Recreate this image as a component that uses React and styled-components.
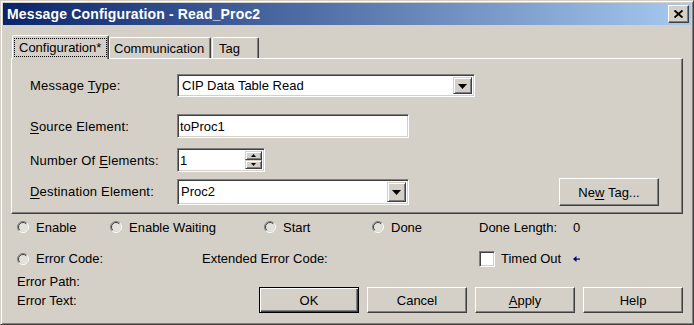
import React from "react";
import styled, { createGlobalStyle } from "styled-components";

const GlobalStyle = createGlobalStyle`
  html, body {
    margin: 0;
    padding: 0;
    background: #d4d0c8;
  }
  body {
    font-family: "Liberation Sans", Arial, sans-serif;
    font-size: 13px;
    color: #000;
  }
  * { box-sizing: border-box; }
`;

const Window = styled.div`
  width: 694px;
  height: 325px;
  background: #d4d0c8;
  border: 1px solid;
  border-color: #d4d0c8 #404040 #404040 #d4d0c8;
  box-shadow: inset 1px 1px #fff, inset -1px -1px #808080;
  padding: 2px;
  display: flex;
  flex-direction: column;
`;

const TitleBar = styled.div`
  height: 22px;
  display: flex;
  align-items: center;
  padding-left: 4px;
  background: linear-gradient(to right, #0a246a, #a6caf0);
`;

const Title = styled.span`
  color: #fff;
  font-weight: bold;
  font-size: 14px;
  letter-spacing: 0.15px;
`;

const raised = `
  background: #d4d0c8;
  border: 1px solid;
  border-color: #fff #404040 #404040 #fff;
  box-shadow: inset -1px -1px #808080;
`;

const sunken = `
  background: #fff;
  border: 1px solid;
  border-color: #808080 #fff #fff #808080;
  box-shadow: inset 1px 1px #404040, inset -1px -1px #d4d0c8;
`;

const CloseButton = styled.div`
  ${raised}
  width: 21px;
  height: 18px;
  margin-left: auto;
  margin-right: 2px;
  display: flex;
  align-items: center;
  justify-content: center;
`;

const Body = styled.div`
  padding: 10px 8px 0 8px;
  display: flex;
  flex-direction: column;
`;

const TabRow = styled.div`
  height: 23px;
  display: flex;
  align-items: flex-end;
  padding-left: 1px;
`;

const Tab = styled.div`
  position: relative;
  z-index: 1;
  width: ${(p) => p.$w}px;
  height: ${(p) => (p.$active ? 24 : 21)}px;
  margin-bottom: ${(p) => (p.$active ? -1 : 0)}px;
  margin-left: ${(p) => p.$ml || 0}px;
  padding-left: ${(p) => p.$pad}px;
  padding-bottom: ${(p) => (p.$active ? 2 : 0)}px;
  display: flex;
  align-items: center;
  background: #d4d0c8;
  border-top: 1px solid #fff;
  border-left: 1px solid #fff;
  border-right: 1px solid #404040;
  box-shadow: inset -1px 0 #808080;
  border-radius: 2px 2px 0 0;
  white-space: nowrap;
`;

const FocusLabel = styled.span`
  border: 1px dotted #000;
  height: 19px;
  padding: 0 5px 0 4px;
  display: flex;
  align-items: center;
  margin-top: 2px;
`;

const Panel = styled.div`
  height: 156px;
  width: 672px;
  border: 1px solid;
  border-color: #fff #404040 #404040 #fff;
  box-shadow: inset -1px -1px #808080;
  padding: 15px 0 0 18px;
  display: flex;
  flex-direction: column;
`;

const Field = styled.div`
  display: flex;
  align-items: center;
  margin-top: ${(p) => p.$mt || 0}px;
`;

const Label = styled.span`
  width: 147px;
  flex-shrink: 0;
  white-space: nowrap;
  letter-spacing: 0.2px;
`;

const U = styled.span`
  text-decoration: underline;
  text-underline-offset: 2px;
`;

const Combo = styled.div`
  ${sunken}
  width: ${(p) => p.$w}px;
  height: ${(p) => p.$h}px;
  padding: 2px;
  display: flex;
  align-items: stretch;
`;

const Value = styled.span`
  flex: 1;
  display: flex;
  align-items: center;
  padding-left: ${(p) => p.$pad || 0}px;
  white-space: nowrap;
`;

const DropButton = styled.div`
  ${raised}
  border-color: #d4d0c8 #404040 #404040 #d4d0c8;
  box-shadow: inset 1px 1px #fff, inset -1px -1px #808080;
  width: 19px;
  display: flex;
  align-items: center;
  justify-content: center;
  padding-top: 1px;
`;

const SpinColumn = styled.div`
  width: 17px;
  display: flex;
  flex-direction: column;
`;

const SpinButton = styled.div`
  ${raised}
  border-color: #d4d0c8 #404040 #404040 #d4d0c8;
  box-shadow: inset 1px 1px #fff, inset -1px -1px #808080;
  flex: 1;
  display: flex;
  align-items: center;
  justify-content: center;
`;

const PushButton = styled.div`
  ${raised}
  width: ${(p) => p.$w || 100}px;
  height: ${(p) => p.$h || 26}px;
  display: flex;
  align-items: center;
  justify-content: center;
  margin-left: ${(p) => (p.$auto ? "auto" : "0")};
  margin-right: ${(p) => p.$mr || 0}px;
  margin-top: ${(p) => p.$mt || 0}px;
  align-self: flex-start;
  ${(p) =>
    p.$default &&
    `
    border-color: #000;
    box-shadow: inset 1px 1px #fff, inset -1px -1px #404040, inset -2px -2px #808080;
  `}
`;

const StatusRow = styled.div`
  display: flex;
  align-items: center;
  height: ${(p) => p.$h}px;
  margin-top: ${(p) => p.$mt}px;
  padding-left: 6px;
`;

const Cell = styled.div`
  width: ${(p) => (p.$w ? `${p.$w}px` : "auto")};
  flex-shrink: 0;
  display: flex;
  align-items: center;
  gap: ${(p) => p.$gap || 0}px;
  white-space: nowrap;
`;

const CheckBox = styled.span`
  ${sunken}
  width: 16px;
  height: 16px;
  display: inline-block;
`;

const BottomArea = styled.div`
  display: flex;
  margin-top: 6px;
  padding-left: 6px;
`;

const ErrorColumn = styled.div`
  width: 242px;
  display: flex;
  flex-direction: column;
  gap: 3px;
`;

const Line = styled.span`
  height: 16px;
  display: flex;
  align-items: center;
`;

const ButtonBar = styled.div`
  display: flex;
  gap: 8px;
  margin-top: 14px;
`;

function Radio() {
  return (
    <svg width="12" height="12" viewBox="0 0 12 12">
      <circle cx="6" cy="6" r="4.6" fill="#e4e1db" />
      <path d="M2.1 9.9 A5.5 5.5 0 0 1 9.9 2.1" fill="none" stroke="#808080" />
      <path d="M9.9 2.1 A5.5 5.5 0 0 1 2.1 9.9" fill="none" stroke="#fff" />
      <path d="M2.8 9.2 A4.5 4.5 0 0 1 9.2 2.8" fill="none" stroke="#404040" />
    </svg>
  );
}

function DownArrow({ w = 7 }) {
  const h = Math.ceil(w / 2);
  return (
    <svg width={w} height={h} viewBox={`0 0 ${w} ${h}`}>
      <polygon points={`0,0 ${w},0 ${w / 2},${h}`} fill="#000" />
    </svg>
  );
}

function UpArrow({ w = 5 }) {
  const h = Math.ceil(w / 2);
  return (
    <svg width={w} height={h} viewBox={`0 0 ${w} ${h}`}>
      <polygon points={`0,${h} ${w},${h} ${w / 2},0`} fill="#000" />
    </svg>
  );
}

function RadioItem({ w, children }) {
  return (
    <Cell $w={w} $gap={7}>
      <Radio />
      <span>{children}</span>
    </Cell>
  );
}

export default function App() {
  return (
    <>
      <GlobalStyle />
      <Window>
        <TitleBar>
          <Title>Message Configuration - Read_Proc2</Title>
          <CloseButton>
            <svg width="9" height="8" viewBox="0 0 9 8">
              <path d="M0.5 0.5 L8.5 7.5 M8.5 0.5 L0.5 7.5" stroke="#000" strokeWidth="1.9" />
            </svg>
          </CloseButton>
        </TitleBar>
        <Body>
          <TabRow>
            <Tab $active $w={97} $pad={1}>
              <FocusLabel>Configuration*</FocusLabel>
            </Tab>
            <Tab $w={102} $pad={4}>Communication</Tab>
            <Tab $w={47} $ml={1} $pad={6}>Tag</Tab>
          </TabRow>
          <Panel>
            <Field>
              <Label>
                Message <U>T</U>ype:
              </Label>
              <Combo $w={298} $h={23}>
                <Value $pad={2}>CIP Data Table Read</Value>
                <DropButton>
                  <DownArrow w={9} />
                </DropButton>
              </Combo>
            </Field>
            <Field $mt={17}>
              <Label>
                <U>S</U>ource Element:
              </Label>
              <Combo $w={232} $h={24}>
                <Value>toProc1</Value>
              </Combo>
            </Field>
            <Field $mt={10}>
              <Label>
                Number Of <U>E</U>lements:
              </Label>
              <Combo $w={88} $h={24}>
                <Value>1</Value>
                <SpinColumn>
                  <SpinButton>
                    <UpArrow />
                  </SpinButton>
                  <SpinButton>
                    <DownArrow w={5} />
                  </SpinButton>
                </SpinColumn>
              </Combo>
            </Field>
            <Field $mt={5}>
              <Label>
                <U>D</U>estination Element:
              </Label>
              <Combo $w={232} $h={26}>
                <Value $pad={1}>Proc2</Value>
                <DropButton>
                  <DownArrow w={9} />
                </DropButton>
              </Combo>
              <PushButton $auto $mr={23} $h={28} $mt={1}>
                Ne<U>w</U>&nbsp;Tag...
              </PushButton>
            </Field>
          </Panel>
          <StatusRow $h={16} $mt={5}>
            <RadioItem w={93}>Enable</RadioItem>
            <RadioItem w={154}>Enable Waiting</RadioItem>
            <RadioItem w={108}>Start</RadioItem>
            <RadioItem w={107}>Done</RadioItem>
            <Cell $w={94}>Done Length:</Cell>
            <Cell>0</Cell>
          </StatusRow>
          <StatusRow $h={17} $mt={15}>
            <RadioItem w={185}>Error Code:</RadioItem>
            <Cell $w={277}>Extended Error Code:</Cell>
            <Cell $w={94} $gap={6}>
              <CheckBox />
              <span>Timed Out</span>
            </Cell>
            <Cell>
              <svg width="8" height="6" viewBox="0 0 8 6">
                <polygon points="0,3 3.5,0 3.5,6" fill="#000080" />
                <rect x="3" y="2.5" width="4" height="1.2" fill="#000080" />
              </svg>
            </Cell>
          </StatusRow>
          <BottomArea>
            <ErrorColumn>
              <Line>Error Path:</Line>
              <Line>Error Text:</Line>
            </ErrorColumn>
            <ButtonBar>
              <PushButton $default>OK</PushButton>
              <PushButton>Cancel</PushButton>
              <PushButton>
                <U>A</U>pply
              </PushButton>
              <PushButton>Help</PushButton>
            </ButtonBar>
          </BottomArea>
        </Body>
      </Window>
    </>
  );
}
